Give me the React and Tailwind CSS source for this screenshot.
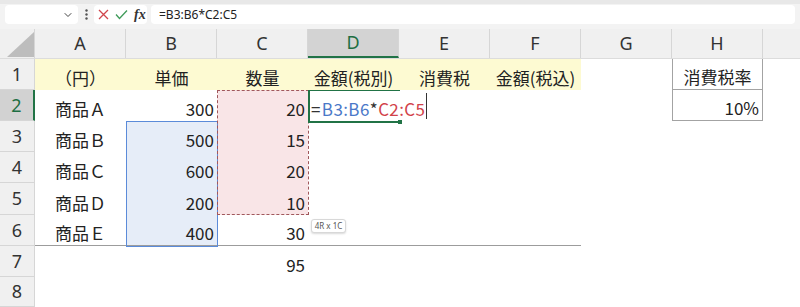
import React from "react";
import { ChevronDown } from "lucide-react";

const ROWH = ["h-[31px]", "h-[31px]", "h-[31px]", "h-[31px]", "h-[32px]", "h-[31px]", "h-[31px]", "h-[30px]"];

function Cell({ children, align = "left", className = "" }) {
  const a =
    align === "right" ? "justify-end pr-[3px]" : align === "center" ? "justify-center" : "justify-start pl-[3px]";
  return (
    <div className={`w-[91px] shrink-0 h-full box-border flex items-end ${a} leading-[24px] whitespace-nowrap ${className}`}>
      {children}
    </div>
  );
}

function RowHead({ n, active }) {
  return (
    <div
      className={`w-[35px] shrink-0 h-full box-border border-b border-[#d6d6d6] flex items-center justify-center font-['Noto_Sans',sans-serif] text-[18px] ${
        active ? "bg-[#d2d2d2] text-[#1e6e43] border-r-2 border-r-[#217346]" : "bg-[#f0f0f0] text-[#333] border-r border-r-[#d6d6d6]"
      }`}
    >
      {n}
    </div>
  );
}

export default function App() {
  const yellow = "bg-[#fdfad2]";
  const pink = "bg-[#f9e5e7]";
  const blue = "bg-[#e6edf8]";
  const rows = [
    [
      <Cell key="a" align="center" className={yellow}>（円）</Cell>,
      <Cell key="b" align="center" className={yellow}>単価</Cell>,
      <Cell key="c" align="center" className={yellow}>数量</Cell>,
      <Cell key="d" align="center" className={yellow}>金額(税別)</Cell>,
      <Cell key="e" align="center" className={yellow}>消費税</Cell>,
      <Cell key="f" align="center" className={yellow}>金額(税込)</Cell>,
      <Cell key="g" />,
      <Cell key="h" align="center" className="border-l border-r border-b border-[#a3a3a3]">消費税率</Cell>,
    ],
    [
      <Cell key="a" align="center">商品Ａ</Cell>,
      <Cell key="b" align="right">300</Cell>,
      <Cell key="c" align="right" className={pink}>20</Cell>,
      <Cell key="d" className="relative z-10 overflow-visible tracking-[0.4px]">
        <span className="text-[#333] mr-[1px]">=</span>
        <span className="text-[#4a78c8]">B3:B6</span>
        <span className="text-[#333]">*</span>
        <span className="text-[#d2424a]">C2:C5</span>
      </Cell>,
      <Cell key="e" />,
      <Cell key="f" />,
      <Cell key="g" />,
      <Cell key="h" align="right" className="border-l border-r border-b border-[#a3a3a3]">10%</Cell>,
    ],
    [
      <Cell key="a" align="center">商品Ｂ</Cell>,
      <Cell key="b" align="right" className={blue}>500</Cell>,
      <Cell key="c" align="right" className={pink}>15</Cell>,
    ],
    [
      <Cell key="a" align="center">商品Ｃ</Cell>,
      <Cell key="b" align="right" className={blue}>600</Cell>,
      <Cell key="c" align="right" className={pink}>20</Cell>,
    ],
    [
      <Cell key="a" align="center">商品Ｄ</Cell>,
      <Cell key="b" align="right" className={blue}>200</Cell>,
      <Cell key="c" align="right" className={pink}>10</Cell>,
    ],
    [
      <Cell key="a" align="center" className="border-b border-[#9c9c9c]">商品Ｅ</Cell>,
      <Cell key="b" align="right" className={`${blue} border-b border-[#9c9c9c]`}>400</Cell>,
      <Cell key="c" align="right" className="border-b border-[#9c9c9c]">30</Cell>,
      <Cell key="d" className="border-b border-[#9c9c9c]" />,
      <Cell key="e" className="border-b border-[#9c9c9c]" />,
      <Cell key="f" className="border-b border-[#9c9c9c]" />,
    ],
    [<Cell key="a" />, <Cell key="b" />, <Cell key="c" align="right">95</Cell>],
    [],
  ];

  const cols = ["A", "B", "C", "D", "E", "F", "G", "H"];

  return (
    <div className="relative w-[800px] h-[307px] overflow-hidden bg-white font-['Noto_Sans_CJK_JP',sans-serif] text-[17px] text-[#222]">
      {/* formula bar */}
      <div className="h-[29px] box-border bg-[#f3f3f3] border-t-4 border-[#e8e8e8] flex items-start pt-[1px] pl-[5px] pr-[5px]">
        <div className="w-[73px] h-[19px] bg-white rounded-[4px] flex items-center justify-end pr-[4px]">
          <ChevronDown size={12} strokeWidth={2} className="text-[#444]" />
        </div>
        <div className="w-[16px] h-[19px] flex items-center justify-center">
          <svg width="3" height="11" viewBox="0 0 3 11">
            <circle cx="1.5" cy="1.5" r="1.2" fill="#555" />
            <circle cx="1.5" cy="5.5" r="1.2" fill="#555" />
            <circle cx="1.5" cy="9.5" r="1.2" fill="#555" />
          </svg>
        </div>
        <div className="w-[53px] h-[19px] bg-white rounded-[4px] flex items-center pl-[4px] gap-[6px]">
          <svg width="11" height="11" viewBox="0 0 11 11">
            <path d="M1 1 L10 10 M10 1 L1 10" stroke="#d0454c" strokeWidth="1.3" fill="none" />
          </svg>
          <svg width="13" height="11" viewBox="0 0 13 11">
            <path d="M1 5.5 L4.5 9.5 L12 1.5" stroke="#3f9b5a" strokeWidth="1.3" fill="none" />
          </svg>
          <span className="font-['Liberation_Serif',serif] italic font-bold text-[14px] leading-none text-[#333]">fx</span>
        </div>
        <div className="ml-[4px] flex-1 h-[19px] bg-white rounded-[4px] flex items-center pl-[8px] font-['Noto_Sans',sans-serif] text-[12px] text-[#222]">
          =B3:B6*C2:C5
        </div>
      </div>

      {/* column headers */}
      <div className="h-[30px] flex bg-[#f0f0f0] border-b border-[#dcdcdc] box-border">
        <div className="w-[35px] shrink-0 h-full border-r border-[#d6d6d6] box-border">
          <svg width="35" height="30" viewBox="0 0 35 30">
            <polygon points="34,3 34,28 7,28" fill="#bdbdbd" />
          </svg>
        </div>
        {cols.map((c) => (
          <div
            key={c}
            className={`w-[91px] shrink-0 h-full box-border border-r border-[#d6d6d6] flex items-center justify-center font-['Noto_Sans',sans-serif] text-[18px] ${
              c === "D" ? "bg-[#d3d3d3] text-[#1e6e43] border-b-2 border-b-[#217346]" : "text-[#333]"
            }`}
          >
            {c}
          </div>
        ))}
        <div className="flex-1 h-full" />
      </div>

      {/* body rows */}
      {rows.map((cells, i) => (
        <div key={i} className={`flex ${ROWH[i]}`}>
          <RowHead n={i + 1} active={i === 1} />
          {cells}
        </div>
      ))}

      {/* B3:B6 reference range */}
      <div className="absolute left-[126px] top-[121px] w-[92px] h-[126px] border border-[#5b8bd9] pointer-events-none" />
      {/* C2:C5 dashed range */}
      <div className="absolute left-[217px] top-[90px] w-[92px] h-[125px] border border-dashed border-[#a0585c] pointer-events-none" />
      {/* active cell D2 */}
      <div className="absolute left-[308px] top-[90px] w-[92px] h-[33px] border-l-2 border-t border-b-2 border-[#217346] pointer-events-none" />
      <div className="absolute left-[398px] top-[120px] w-[4px] h-[4px] bg-[#217346]" />
      {/* text cursor */}
      <div className="absolute left-[426px] top-[93px] w-px h-[26px] bg-[#333]" />
      {/* size tooltip */}
      <div className="absolute left-[311px] top-[219px] w-[35px] h-[14px] bg-white border border-[#d8d8d8] rounded-[3px] shadow-[0_1px_2px_rgba(0,0,0,0.15)] flex items-center justify-center font-['Noto_Sans',sans-serif] text-[8px] text-[#555] leading-none">
        4R x 1C
      </div>
    </div>
  );
}
